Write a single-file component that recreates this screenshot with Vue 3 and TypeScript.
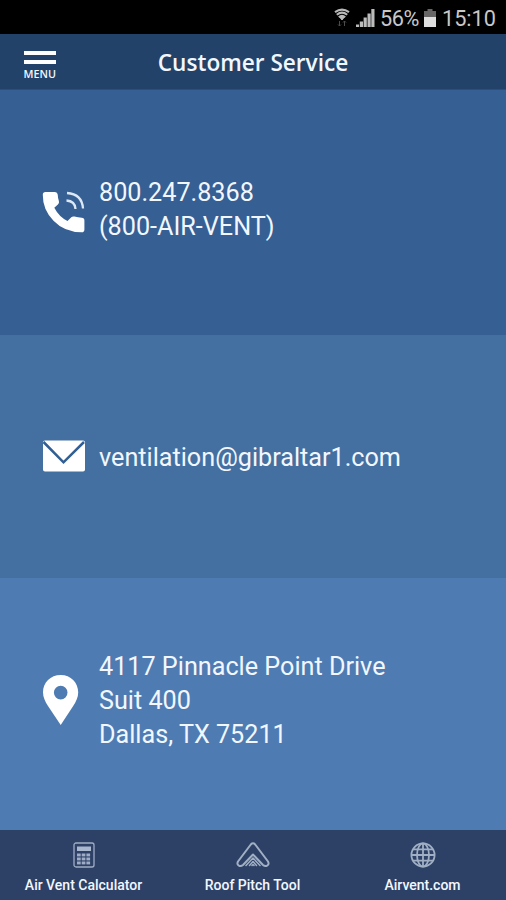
<script setup lang="ts">
interface Contact {
  kind: 'phone' | 'mail' | 'place'
  lines: string[]
}

const contacts: Contact[] = [
  { kind: 'phone', lines: ['800.247.8368', '(800-AIR-VENT)'] },
  { kind: 'mail', lines: ['ventilation@gibraltar1.com'] },
  { kind: 'place', lines: ['4117 Pinnacle Point Drive', 'Suit 400', 'Dallas, TX 75211'] },
]
const keyRows = [11.5, 15.5, 19.5]
const keyColumns = [4, 8.7, 13.4]
</script>

<template>
  <div class="screen">
    <div class="status">
      <svg class="wifi" width="16" height="20" viewBox="0 0 16 20" fill="none" stroke="#b9b9b9">
        <path d="M1 4.200Q8-1 15 4.200M2.800 6.800Q8 2.500 13.200 6.800M4.800 9.200Q8 6.500 11.200 9.200" stroke-width="2.100" />
        <path d="M6 9.500h4L8 12z" fill="#b9b9b9" />
        <path d="M5.500 13v5M4 16.500 5.500 18 7 16.500M10.500 18v-5M9 14.500l1.500-1.500 1.500 1.500" stroke="#4c4c4c" />
      </svg>
      <svg class="signal" width="19" height="18" viewBox="0 0 19 18" fill="#bcbcbc">
        <path d="M0 15.500h3V18H0zM3.800 12.500h3.200V18H3.800zM7.600 8.500h3.200V18H7.600zM11.500 4.500h3.200V18h-3.200zM15.300 0h3.200v18h-3.200z" />
      </svg>
      <span class="percent">56%</span>
      <svg class="battery" width="12" height="18" viewBox="0 0 12 18">
        <path d="M3.500 0h5v2H12v7H0V2h3.500z" fill="#666" />
        <path d="M0 8h12v10H0z" fill="#dedede" />
      </svg>
      <span class="clock">15:10</span>
    </div>

    <header class="header">
      <button class="menu" type="button">
        <span class="bar"></span>
        <span class="bar"></span>
        <span class="menu-label">MENU</span>
      </button>
      <h1 class="title">Customer Service</h1>
    </header>

    <main class="contacts">
      <section v-for="contact in contacts" :key="contact.kind" class="contact" :class="contact.kind">
        <svg v-if="contact.kind === 'phone'" class="icon" width="44" height="44" viewBox="0 0 44 44">
          <path fill="#fff" d="M3.500 2H13q2.500 0 2.700 2.500.2 3.800 1.200 6.500.6 2-1 3.500l-3.600 3.300q4.800 9.200 13.200 13.200l3.800-3.700q1.300-1.300 3.200-.7 3.500 1.100 7.300 1.200 2.600.1 2.600 2.600v9q0 2.800-2.600 2.800Q22.500 42.200 11.500 30.700.6 19.500.8 4.700.8 2 3.500 2z" />
          <path fill="none" stroke="#dce8f5" stroke-width="2.300" d="M25 3Q40 4 41 18.500M24.500 10.500Q33 11 33.500 19" />
        </svg>
        <svg v-else-if="contact.kind === 'mail'" class="icon" width="44" height="32" viewBox="0 0 44 32">
          <rect x="1" y=".5" width="42" height="31" rx="2" fill="#fff" />
          <path d="m1.500 2 20 20.300L42 2" fill="none" stroke="#315f94" stroke-width="2.500" />
        </svg>
        <svg v-else class="icon" width="44" height="50" viewBox="0 0 44 50">
          <path fill="#fff" fill-rule="evenodd" d="M18.700 0C8.500 0 1 7.500 1 17.300 1 22.500 3.200 26.500 6 31l12.700 19L31.200 31c2.900-4.500 5-8.500 5-13.700C36.200 7.500 28.800 0 18.700 0zm0 10.800a6.800 6.800 0 1 1 0 13.600 6.800 6.800 0 0 1 0-13.600z" />
        </svg>
        <div class="lines">
          <div v-for="line in contact.lines" :key="line" class="line"><span>{{ line }}</span></div>
        </div>
      </section>
    </main>

    <nav class="tabs">
      <a class="tab calculator">
        <svg width="22" height="26" viewBox="0 0 22 26">
          <rect x="1" y="1" width="20" height="24" rx="2" fill="none" stroke="#9eadc5" stroke-width="1.300" />
          <path d="M4 4.500h14V9H4z" fill="#a9b8ce" />
          <template v-for="y in keyRows" :key="y">
            <rect v-for="x in keyColumns" :key="x" :x="x" :y="y" width="3.700" height="2.900" fill="#9eadc5" />
          </template>
        </svg>
        <span class="tab-label">Air Vent Calculator</span>
      </a>
      <a class="tab roof">
        <svg width="34" height="26" viewBox="0 0 34 26" fill="none" stroke="#a0afc4" stroke-linejoin="round" stroke-linecap="round">
          <path stroke-width="2" d="M14.800 2.500q2.200-2.300 4.400 0L32 19.500q1.500 3-1 4.200-2 .8-4-.7L17 12.500 7 23q-2 1.500-4 .7-2.500-1.200-1-4.200z" />
          <path stroke-width="1.500" d="m10 23.500 7-7.500 7 7.500M13.500 23.500l3.500-4 3.500 4M16 23.500l1-1 1 1" />
        </svg>
        <span class="tab-label">Roof Pitch Tool</span>
      </a>
      <a class="tab website">
        <svg width="26" height="26" viewBox="0 0 26 26" fill="none" stroke="#a0afc4" stroke-width="1.800">
          <circle cx="13" cy="13" r="11.600" />
          <ellipse cx="13" cy="13" rx="6" ry="11.600" />
          <path d="M13 1v24M1 13h24M3 7.300h20M3 18.700h20" />
        </svg>
        <span class="tab-label">Airvent.com</span>
      </a>
    </nav>
  </div>
</template>

<style>
body {
  margin: 0;
}
</style>

<style scoped>
.screen {
  width: 506px;
  height: 900px;
  display: grid;
  grid-template-rows: 34px 56px 740px 70px;
  overflow: hidden;
  font-family: Roboto, sans-serif;
  color: #f2f7ff;
}
.status {
  display: flex;
  align-items: center;
  justify-content: flex-end;
  padding: 2px 10px 0 0;
  box-sizing: border-box;
  background: #000;
  color: #c8c8c8;
  font-size: 21.700px;
  white-space: nowrap;
}
.signal {
  margin: 0 5px 0 6px;
}
.battery {
  margin: 0 6px 0 5px;
}
.percent {
  letter-spacing: -0.400px;
}
.header {
  display: grid;
  grid-template-columns: 80px 1fr 80px;
  align-items: center;
  background: #22426a;
  border-bottom: 1px solid #2b4e7b;
  box-sizing: border-box;
}
.menu {
  width: 32px;
  margin: 8px 0 0 23.500px;
  padding: 0;
  border: 0;
  background: none;
  color: #f2f7ff;
  display: flex;
  flex-direction: column;
  gap: 5px;
}
.bar {
  height: 4px;
  background: #fff;
}
.menu-label {
  margin-top: -1px;
  font: 600 10.800px/12px "Open Sans", sans-serif;
  white-space: nowrap;
}
.title {
  margin: 0;
  padding-top: 2px;
  text-align: center;
  font: 600 22.600px/30px "Open Sans", sans-serif;
  white-space: nowrap;
}
.contacts {
  display: grid;
  grid-template-rows: 245px 243px 252px;
}
.contact {
  display: flex;
  align-items: center;
  padding-left: 42px;
  gap: 13px;
}
.phone {
  padding-bottom: 2px;
  background: #365f93;
}
.phone .lines {
  padding-bottom: 4px;
}
.mail {
  background: #4470a1;
}
.mail .icon {
  margin-bottom: 2px;
}
.mail .lines {
  padding-top: 2px;
}
.place {
  padding-bottom: 8px;
  background: #4e7cb2;
}
.place .lines {
  padding-top: 2px;
}
.icon {
  flex: none;
}
.line {
  font-size: 25.200px;
  line-height: 34px;
  white-space: nowrap;
}
.tabs {
  display: flex;
  background: #2d4167;
}
.tab {
  flex: 1;
  display: flex;
  flex-direction: column;
  align-items: center;
  padding-top: 12px;
}
.calculator {
  padding-right: 2px;
}
.website {
  padding-left: 3px;
}
.tab-label {
  margin-top: 8px;
  font-size: 14px;
  font-weight: 500;
  line-height: 18px;
  white-space: nowrap;
}
</style>
